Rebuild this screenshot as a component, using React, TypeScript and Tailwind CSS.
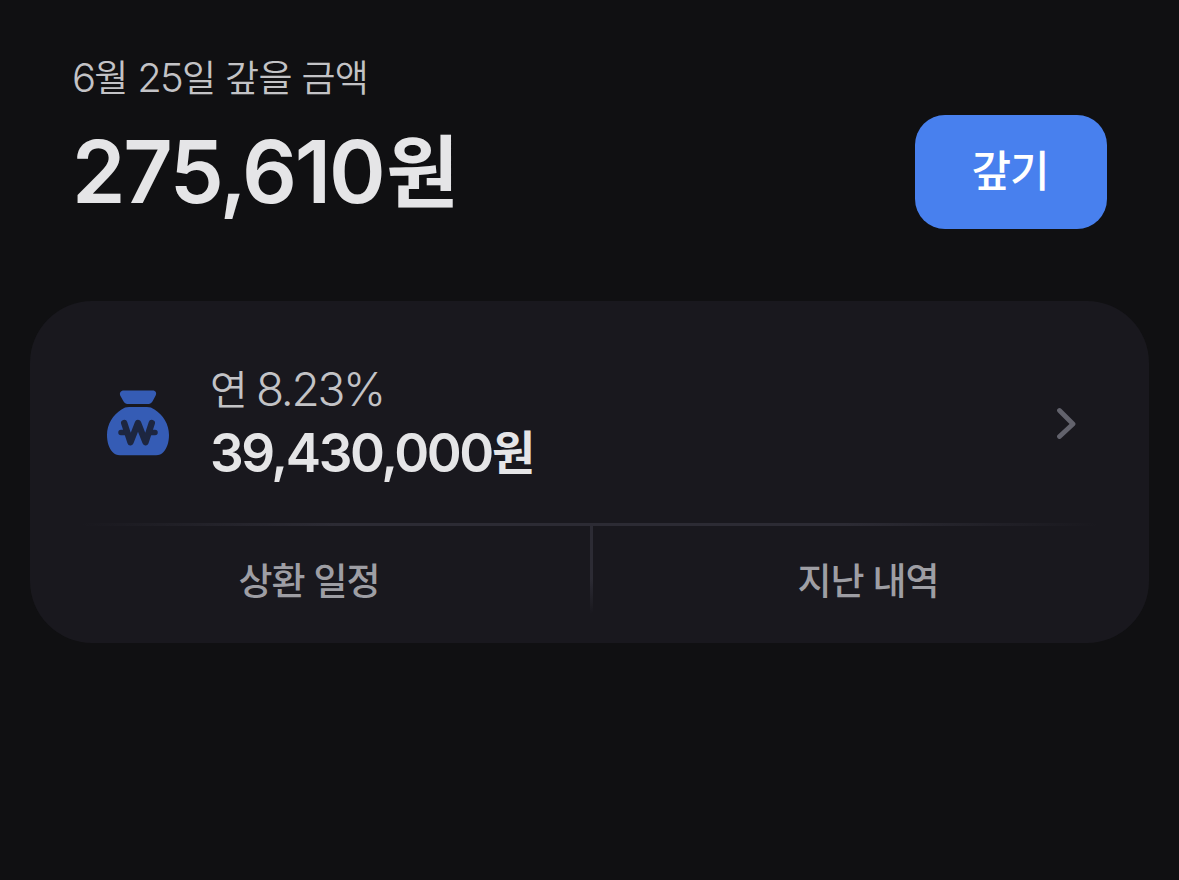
import React from 'react';

const WonPouch = () => (
  <svg className="block w-[62px] h-[66px]" viewBox="0 0 62 66" fill="none">
    <path
      d="M17 0.500H45.500C49 0.500 50 3 48.400 6L46 10.500C44.800 12.800 43.500 14 41.500 14H20.500C18.500 14 17.200 12.800 16 10.500L13.500 6C12 3 13.500 0.500 17 0.500Z"
      fill="#355cb5"
    />
    <path
      d="M22 17H40C43 17 45 17.800 47.500 19.500C56 25 62 34 62 45C62 52 60 58 56.500 62C54.500 64.300 52 65.300 49 65.300H13C10 65.300 7.500 64.300 5.500 62C2 58 0 52 0 45C0 34 6 25 14.500 19.500C17 17.800 19 17 22 17Z"
      fill="#355cb5"
    />
    <path d="M14 42.500H19.500M42.500 42.500H48" stroke="#1d2640" strokeWidth="5.500" strokeLinecap="round" />
    <path
      d="M17.200 33L23.500 52.200L31 33L38.500 52.200L44.800 33"
      stroke="#1d2640"
      strokeWidth="6.400"
      strokeLinecap="round"
      strokeLinejoin="round"
    />
  </svg>
);

const actions = ['상환 일정', '지난 내역'];

const App = () => {
  return (
    <main className="w-full h-screen overflow-hidden bg-[#101012] font-[Inter,'Noto_Sans_CJK_KR',sans-serif]">
      <header className="flex h-[301px] items-start justify-between pl-[72px] pr-[72px]">
        <div className="pt-[54px]">
          <p className="text-[37px] leading-[48px] font-[350] tracking-[-0.700px] text-[#c3c3c6] whitespace-nowrap">
            <span className="text-[40px] tracking-[-1.800px]">6</span>월{' '}
            <span className="text-[40px] tracking-[-1.800px]">25</span>일 갚을 금액
          </p>
          <p className="mt-[17px] text-[86px] leading-[104px] font-semibold tracking-[-2.300px] text-[#e5e5e7] whitespace-nowrap">
            275,610<span className="ml-[3px] align-[1px] text-[79px] leading-none">원</span>
          </p>
        </div>
        <button className="mt-[115px] flex h-[114px] w-[192px] items-center justify-center rounded-[30px] bg-[#4880ee] pr-[2px] pb-[2px] text-[43px] font-medium tracking-[-1px] text-white">
          갚기
        </button>
      </header>

      <section className="mx-[30px] flex h-[342px] flex-col rounded-[62px] bg-[#19181e]">
        <div className="flex h-[222px] items-center pl-[77px] pr-[73px] pt-[22px]">
          <WonPouch />
          <div className="ml-[41px] flex-1 pb-[3px]">
            <p className="text-[46px] leading-[56px] font-[350] tracking-[-2.300px] text-[#c3c3c6]">
              <span className="align-[1px] text-[41px] leading-none">연</span> 8.23%
            </p>
            <p className="mt-[6px] text-[53px] leading-[60px] font-semibold tracking-[-2.400px] text-[#e5e5e7]">
              39,430,000<span className="align-[2px] text-[47px] leading-none">원</span>
            </p>
          </div>
          <svg className="block h-[32px] w-[20px]" viewBox="0 0 20 32" fill="none">
            <path d="M3.500 3.500L17 17L3.500 29.500" stroke="#62626c" strokeWidth="4.800" strokeLinecap="round" strokeLinejoin="round" />
          </svg>
        </div>
        <div className="mx-[50px] h-[3px] shrink-0 bg-[linear-gradient(90deg,transparent,#2c2b34_25%,#2c2b34_75%,transparent)]" />
        <div className="flex flex-1">
          <button className="flex h-[112px] w-[560px] items-center justify-center pr-[2px] text-[37px] font-medium tracking-[-1px] text-[#9e9ea4]">
            {actions[0]}
          </button>
          <div className="h-[88px] w-[3px] bg-[linear-gradient(180deg,#2c2b34,#2c2b34_60%,transparent)]" />
          <button className="flex h-[112px] flex-1 items-center justify-center pr-[6px] text-[37px] font-medium tracking-[-1px] text-[#9e9ea4]">
            {actions[1]}
          </button>
        </div>
      </section>
    </main>
  );
};

export default App;
